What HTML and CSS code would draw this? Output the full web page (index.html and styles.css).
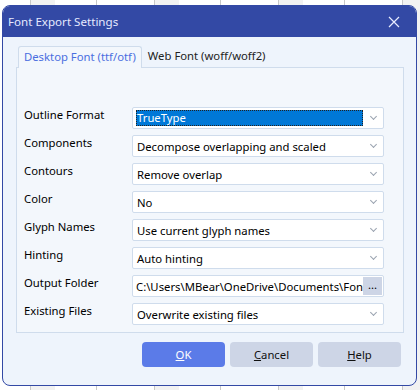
FILE: index.html
```html
<!DOCTYPE html>
<html lang="en">
<head>
  <meta charset="UTF-8" />
  <title>Font Export Settings</title>
  <link rel="stylesheet" href="styles.css">
</head>
<body>

  <div class="dialog">
    <div class="titlebar">
      <span class="title">Font Export Settings</span>
      <svg class="close" width="12" height="12" viewBox="0 0 12 12">
        <path d="M1 1 L11 11 M11 1 L1 11" stroke="#e8ecff" stroke-width="1.2" fill="none"/>
      </svg>
    </div>

    <div class="content">
      <div class="tabs">
        <div class="tab active">Desktop Font (ttf/otf)</div>
        <div class="tab">Web Font (woff/woff2)</div>
      </div>

      <div class="panel">
        <div class="row">
          <span class="label">Outline Format</span>
          <div class="combo"><span class="selected">TrueType</span><span class="chev"></span></div>
        </div>
        <div class="row">
          <span class="label">Components</span>
          <div class="combo"><span class="text">Decompose overlapping and scaled</span><span class="chev"></span></div>
        </div>
        <div class="row">
          <span class="label">Contours</span>
          <div class="combo"><span class="text">Remove overlap</span><span class="chev"></span></div>
        </div>
        <div class="row">
          <span class="label">Color</span>
          <div class="combo"><span class="text">No</span><span class="chev"></span></div>
        </div>
        <div class="row">
          <span class="label">Glyph Names</span>
          <div class="combo"><span class="text">Use current glyph names</span><span class="chev"></span></div>
        </div>
        <div class="row">
          <span class="label">Hinting</span>
          <div class="combo"><span class="text">Auto hinting</span><span class="chev"></span></div>
        </div>
        <div class="row">
          <span class="label">Output Folder</span>
          <div class="combo path"><span class="text">C:\Users\MBear\OneDrive\Documents\Fonts</span><span class="browse">...</span></div>
        </div>
        <div class="row">
          <span class="label">Existing Files</span>
          <div class="combo"><span class="text">Overwrite existing files</span><span class="chev"></span></div>
        </div>
      </div>

      <div class="buttons">
        <button class="btn primary"><u>O</u>K</button>
        <button class="btn"><u>C</u>ancel</button>
        <button class="btn"><u>H</u>elp</button>
      </div>
    </div>
  </div>

</body>
</html>
```

FILE: styles.css
```css
body {
  margin: 0;
  width: 420px;
  height: 390px;
  overflow: hidden;
  font-family: "Noto Sans", "Open Sans", sans-serif;
  font-size: 11.3px;
  color: #000;
  background-color: #fff;
  background-image: repeating-linear-gradient(90deg, #fff 0 30px, #c8c8c8 30px 31px, #f2f2f2 31px 55px, #fff 55px 96px, #c8c8c8 96px 97px, #fff 97px 124px);
}
.dialog {
  margin: 5px 3px 0 2px;
  width: 413px;
  height: 379px;
  background: #eef4fc;
  border: 1px solid #3349a5;
  border-radius: 8px;
  overflow: hidden;
  display: flex;
  flex-direction: column;
}
.titlebar {
  height: 31px;
  background: #3349a5;
  display: flex;
  align-items: center;
  justify-content: space-between;
  padding: 0 16px 0 5px;
  flex-shrink: 0;
}
.title {
  color: #e6eaff;
  font-size: 11.6px;
}
.close {
  display: block;
}
.content {
  padding: 8px 12px 0 13px;
}
.tabs {
  display: flex;
  height: 22px;
  align-items: flex-end;
}
.tab {
  height: 21px;
  line-height: 20px;
  padding: 0 6px;
  color: #222;
}
.tab.active {
  height: 22px;
  margin-left: 2px;
  background: #f3f7fc;
  border: 1px solid #cfdcec;
  border-bottom: none;
  border-radius: 3px 3px 0 0;
  color: #4a6ee0;
  margin-bottom: -1px;
  position: relative;
  z-index: 1;
  box-sizing: border-box;
  padding: 0 5px;
}
.panel {
  height: 266px;
  background: #f3f7fc;
  border: 1px solid #cfdcec;
  padding: 39px 19px 0 7px;
  box-sizing: border-box;
  display: flex;
  flex-direction: column;
  gap: 6px;
}
.row {
  display: flex;
  align-items: flex-start;
  height: 22px;
}
.label {
  width: 108px;
  line-height: 16px;
}
.combo {
  flex: 1;
  height: 22px;
  box-sizing: border-box;
  background: #fff;
  border: 1px solid #cfdcec;
  border-radius: 2px;
  display: flex;
  align-items: center;
  padding: 0 0 0 3px;
  overflow: hidden;
}
.combo .text {
  flex: 1;
  white-space: nowrap;
  overflow: hidden;
  padding-left: 1px;
}
.selected {
  flex: 1;
  height: 16px;
  line-height: 16px;
  background: #0078d7;
  color: #fff;
  outline: 1px dotted #222;
  outline-offset: -1px;
  padding-left: 1px;
}
.chev {
  width: 20px;
  height: 20px;
  flex-shrink: 0;
  position: relative;
}
.chev::after {
  content: "";
  position: absolute;
  left: 8px;
  top: 6px;
  width: 4px;
  height: 4px;
  border-right: 1px solid #9aa3b0;
  border-bottom: 1px solid #9aa3b0;
  transform: rotate(45deg);
}
.path {
  padding-right: 1px;
}
.path .text {
  padding-left: 0;
}
.browse {
  width: 19px;
  height: 18px;
  flex-shrink: 0;
  background: #cdd5e6;
  text-align: center;
  line-height: 16px;
}
.buttons {
  display: flex;
  justify-content: flex-end;
  gap: 5px;
  padding: 9px 3px 0 0;
}
.btn {
  width: 83px;
  height: 25px;
  border: none;
  border-radius: 4px;
  background: #cdd5e6;
  font-family: inherit;
  font-size: 11.3px;
  color: #111;
  padding: 0;
}
.btn.primary {
  background: #5b7be8;
  color: #fff;
}
```
